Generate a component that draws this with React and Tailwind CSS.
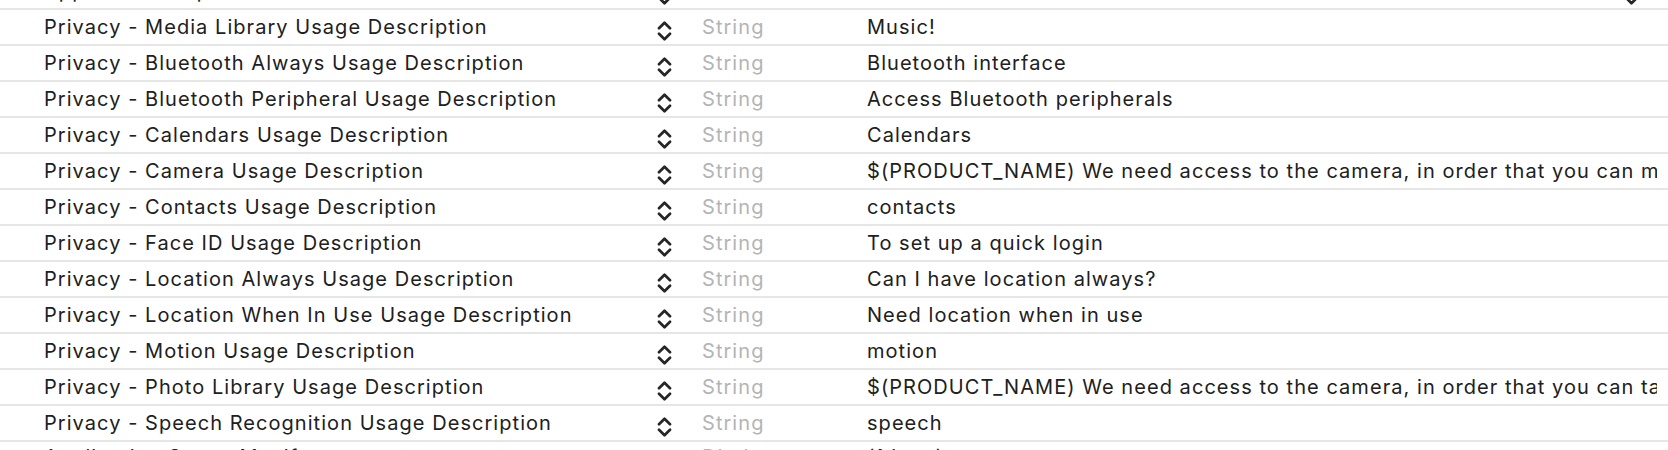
import React from 'react';

const rows = [
  { key: 'Privacy - Media Library Usage Description', value: 'Music!' },
  { key: 'Privacy - Bluetooth Always Usage Description', value: 'Bluetooth interface' },
  { key: 'Privacy - Bluetooth Peripheral Usage Description', value: 'Access Bluetooth peripherals' },
  { key: 'Privacy - Calendars Usage Description', value: 'Calendars' },
  {
    key: 'Privacy - Camera Usage Description',
    value: '$(PRODUCT_NAME) We need access to the camera, in order that you can make video calls',
  },
  { key: 'Privacy - Contacts Usage Description', value: 'contacts' },
  { key: 'Privacy - Face ID Usage Description', value: 'To set up a quick login' },
  { key: 'Privacy - Location Always Usage Description', value: 'Can I have location always?' },
  { key: 'Privacy - Location When In Use Usage Description', value: 'Need location when in use' },
  { key: 'Privacy - Motion Usage Description', value: 'motion' },
  {
    key: 'Privacy - Photo Library Usage Description',
    value: '$(PRODUCT_NAME) We need access to the camera, in order that you can take photos',
  },
  { key: 'Privacy - Speech Recognition Usage Description', value: 'speech' },
];

// up/down popup chevrons, like the plist editor's type stepper
const Chevrons = ({ className }) => (
  <svg
    viewBox="0 0 15 20"
    className={className}
    fill="none"
    stroke="#262626"
    strokeWidth="2.7"
    strokeLinecap="round"
    strokeLinejoin="round"
  >
    <path d="M2 7.2 L7.5 1.8 L13 7.2" />
    <path d="M2 12.8 L7.5 18.2 L13 12.8" />
  </svg>
);

const Row = ({ item, first, last }) => {
  const lead = last ? 'leading-[30px]' : 'leading-[35px]';
  return (
    <div className={`flex shrink-0 ${first ? 'h-[34px]' : 'h-[36px] border-t-2 border-[#e6e6e6]'}`}>
      <div className={`w-[657px] shrink-0 pl-[44px] ${lead} text-[#202020] whitespace-nowrap overflow-hidden`}>
        {item.key}
      </div>
      <Chevrons className={`w-[15px] h-[20px] shrink-0 ${last ? 'mt-[8px]' : 'mt-[11px]'}`} />
      <div className={`w-[195px] shrink-0 pl-[30px] ${lead} text-[#b4b4b4]`}>{item.type || 'String'}</div>
      <div className="w-[790px] shrink-0 flex overflow-hidden">
        <div className={`flex-1 ${lead} text-[#202020] whitespace-nowrap overflow-hidden`}>{item.value}</div>
        {item.popup && <Chevrons className="w-[15px] h-[20px] mt-[11px] mr-[18px] shrink-0" />}
      </div>
    </div>
  );
};

export default function App() {
  return (
    <div className="h-[450px] w-[1668px] overflow-hidden bg-white font-[Inter,sans-serif] text-[20px] tracking-[1.05px] flex flex-col">
      <div className="h-[8px] shrink-0 overflow-hidden flex flex-col justify-end">
        <Row
          first
          item={{ key: 'Application requires iPhone environment', type: 'Boolean', value: 'YES', popup: true }}
        />
      </div>
      {rows.map((item) => (
        <Row key={item.key} item={item} />
      ))}
      <Row last item={{ key: 'Application Scene Manifest', type: 'Dictionary', value: '(1 item)' }} />
    </div>
  );
}
